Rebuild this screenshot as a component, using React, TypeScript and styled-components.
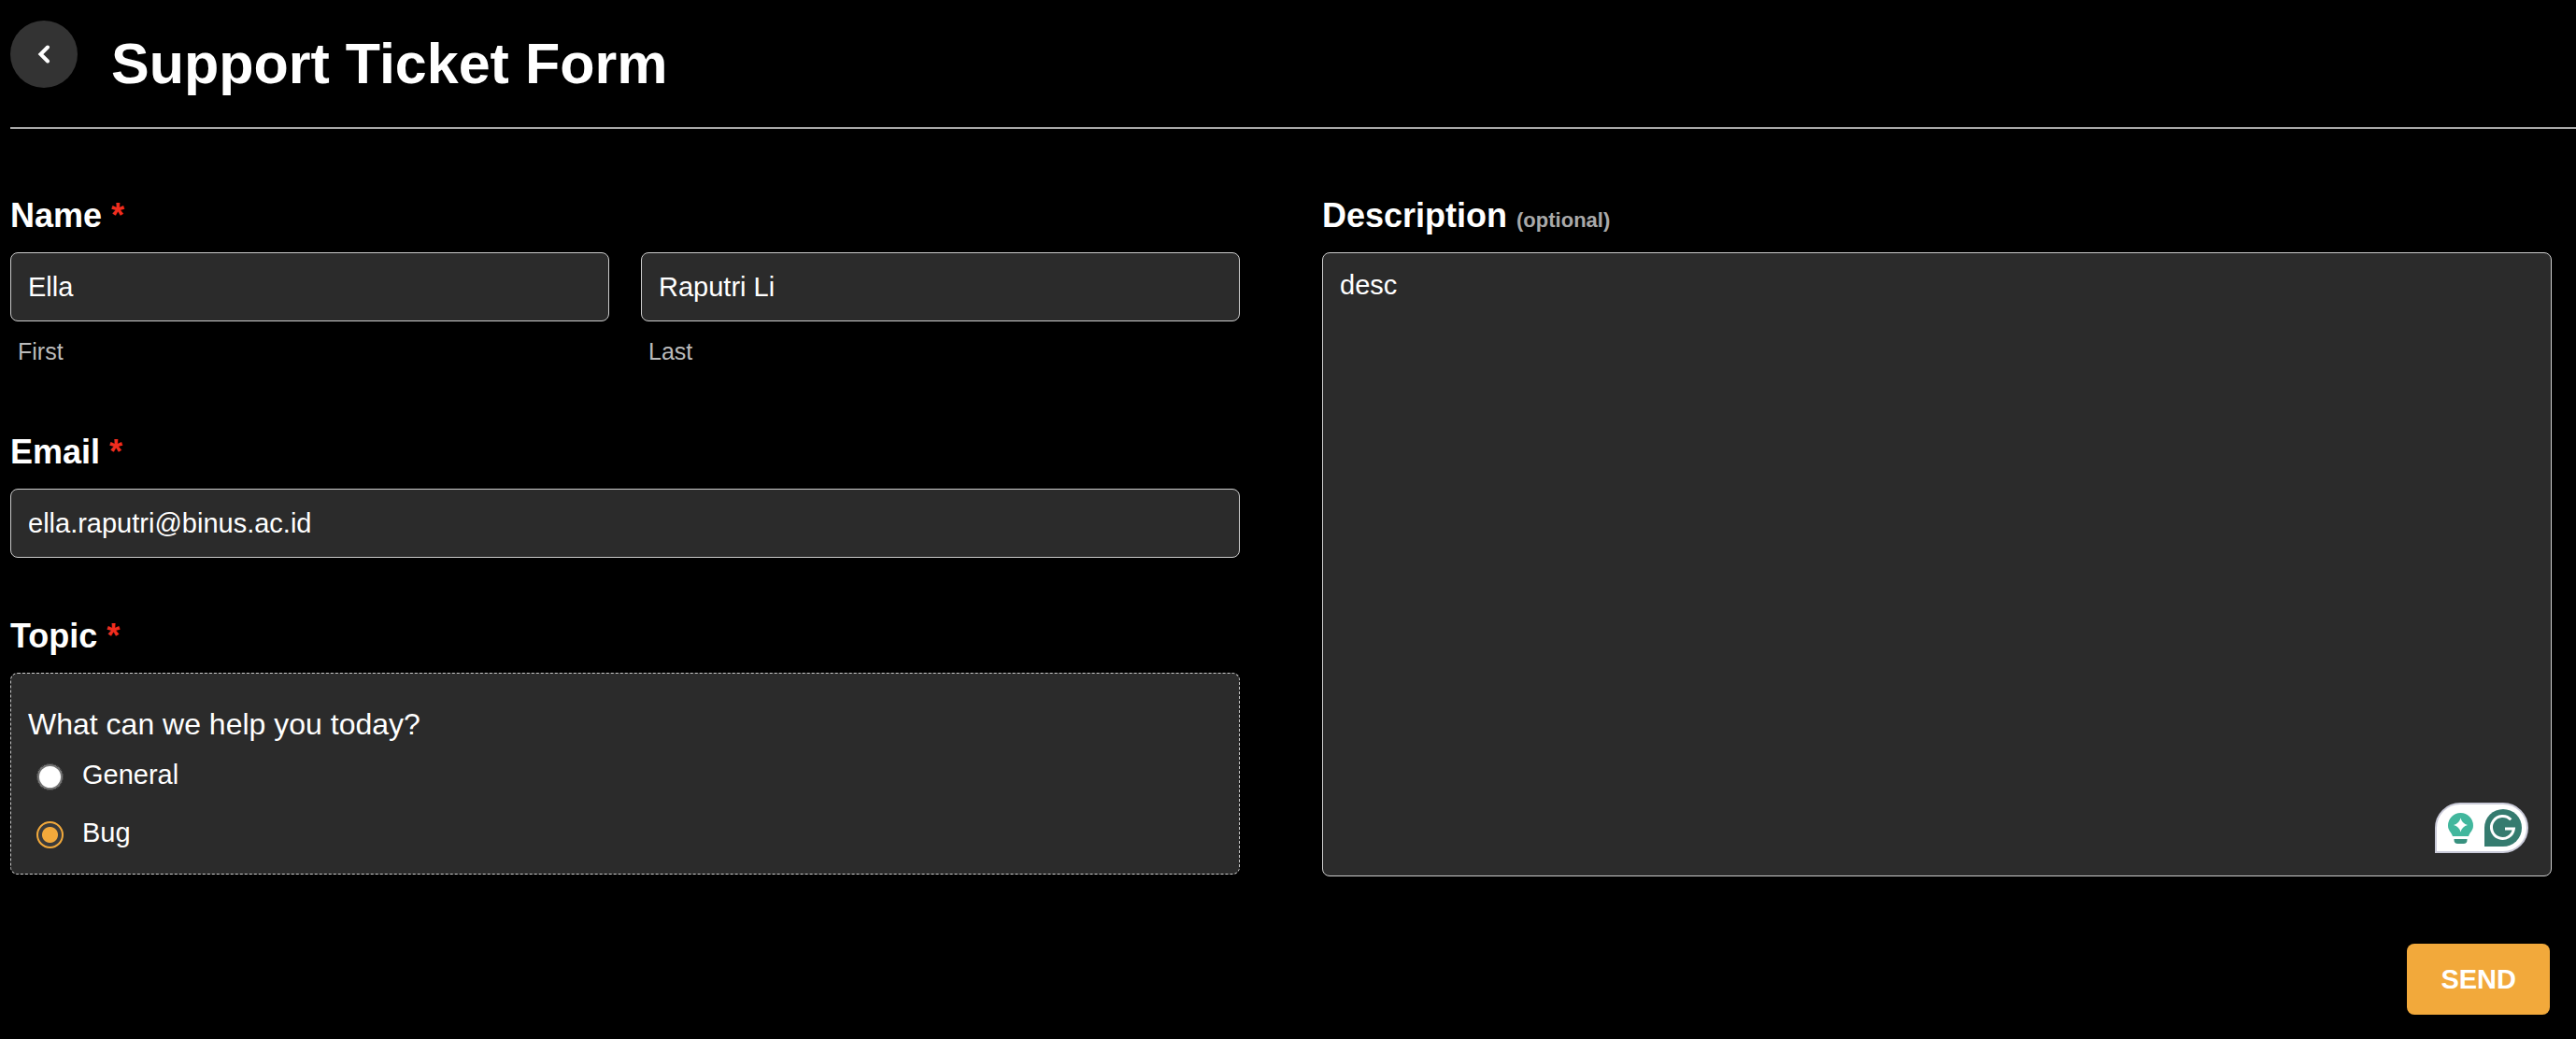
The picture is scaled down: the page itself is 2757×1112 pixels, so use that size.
import React from "react";
import styled, { createGlobalStyle } from "styled-components";

const Global = createGlobalStyle`
  *, *::before, *::after { box-sizing: border-box; }
  body {
    margin: 0;
    background: #000;
    color: #fff;
    font-family: "Liberation Sans", Arial, sans-serif;
  }
  button, input, textarea { font: inherit; color: inherit; }
`;

const Page = styled.main`
  padding: 22px 0 24px 11px;
`;

const Header = styled.header`
  display: flex;
  align-items: flex-start;
  gap: 36px;
  padding-bottom: 28px;
  border-bottom: 2px solid #a9a9a9;
`;

const BackButton = styled.button`
  display: grid;
  place-items: center;
  flex: none;
  width: 72px;
  height: 72px;
  padding: 0;
  border: 0;
  border-radius: 50%;
  background: #333;
  cursor: pointer;
`;

const Title = styled.h1`
  margin: 0;
  padding-top: 6px;
  font-size: 61px;
  line-height: 80px;
`;

const Form = styled.form`
  display: grid;
  grid-template-columns: 1fr 1fr;
  column-gap: 88px;
  padding: 73px 26px 0 0;
`;

const Column = styled.div`
  display: flex;
  flex-direction: column;
  gap: 64px;
`;

const Group = styled.fieldset`
  min-width: 0;
  margin: 0;
  padding: 0;
  border: 0;
`;

const Field = styled.div`
  display: flex;
  flex-direction: column;
`;

const labelText = `
  display: block;
  padding: 0 0 19px;
  font-size: 36px;
  font-weight: 700;
  line-height: 40px;
`;

const Label = styled.label`${labelText}`;
const Legend = styled.legend`${labelText}`;

const Required = styled.span`
  color: #f02d1f;
`;

const Optional = styled.span`
  color: #a9a9a9;
  font-size: 22px;
  line-height: 1;
`;

const NameRow = styled.div`
  display: grid;
  grid-template-columns: 1fr 1fr;
  gap: 34px;
`;

const box = `
  width: 100%;
  border: 1px solid #ccc;
  border-radius: 8px;
  background: #2b2b2b;
  font-size: 29px;
  outline: none;
`;

const TextInput = styled.input`
  ${box}
  height: 74px;
  padding: 0 18px;
`;

const Hint = styled.label`
  padding: 17px 8px 9px;
  color: #bbb;
  font-size: 25px;
  line-height: 30px;
`;

const TopicBox = styled.div`
  ${box}
  border-style: dashed;
  padding: 34px 18px 13px;
`;

const Question = styled.p`
  margin: 0 0 3px;
  font-size: 32px;
  line-height: 40px;
`;

const Option = styled.label`
  display: flex;
  align-items: center;
  gap: 20px;
  height: 62px;
  padding-left: 9px;
  line-height: 32px;
`;

const Radio = styled.input`
  appearance: none;
  flex: none;
  width: 29px;
  height: 29px;
  margin: 4px 0 0;
  border: 1px solid #2b2b2b;
  border-radius: 50%;
  background: #fff;
  box-shadow: inset 0 0 0 2px #767676;

  &:checked {
    border: 2px solid #f2a93b;
    background: radial-gradient(circle, #f2a93b 8px, #3b3b3b 9px);
    box-shadow: none;
  }
`;

const Editor = styled.div`
  position: relative;
  display: flex;
`;

const Description = styled.textarea`
  ${box}
  height: 668px;
  padding: 18px;
  line-height: 33px;
  resize: none;
`;

const Assistant = styled.div`
  position: absolute;
  right: 25px;
  bottom: 25px;
  display: flex;
`;

const Footer = styled.div`
  grid-column: 1 / -1;
  display: flex;
  justify-content: flex-end;
  padding: 72px 2px 0 0;
`;

const SendButton = styled.button`
  height: 76px;
  padding: 0 36px;
  border: 0;
  border-radius: 8px;
  background: #f2a93b;
  font-size: 29px;
  font-weight: 700;
  cursor: pointer;
`;

function AssistantIcon() {
  return (
    <svg width="100" height="54" viewBox="0 0 100 54" aria-hidden="true">
      <path d="M1 53V27A26 26 0 0 1 27 1H73A26 26 0 0 1 73 53Z" fill="#fff" stroke="#c9cad8" strokeWidth="2" />
      <path d="M27.500 11a13.500 13.500 0 0 1 13.500 13.500c0 5.500-3.500 7-5 11.500H19c-1.500-4.500-5-6-5-11.500a13.500 13.500 0 0 1 13.500-13.500Z" fill="#42b79d" />
      <path d="M27.500 16.500q1.500 6 7.500 7.500q-6 1.500-7.500 7.500q-1.500-6-7.500-7.500q6-1.500 7.500-7.500Z" fill="#fff" />
      <path d="M20.500 39H34.500v1a4 4 0 0 1-4 4h-6a4 4 0 0 1-4-4Z" fill="#38917f" />
      <path d="M53 47V27A20 20 0 1 1 73 47Z" fill="#357b6f" />
      <path d="M81.300 18.300A12 12 0 1 0 84.400 28H75" fill="none" stroke="#fff" strokeWidth="3" />
    </svg>
  );
}

export default function App() {
  return (
    <>
      <Global />
      <Page>
        <Header>
          <BackButton type="button" aria-label="Back">
            <svg width="14" height="20" viewBox="0 0 14 20" aria-hidden="true">
              <path d="M11 2.500L3.500 10L11 17.500" fill="none" stroke="#fff" strokeWidth="4" strokeLinecap="round" />
            </svg>
          </BackButton>
          <Title>Support Ticket Form</Title>
        </Header>
        <Form onSubmit={(event) => event.preventDefault()}>
          <Column>
            <Group>
              <Legend>Name <Required>*</Required></Legend>
              <NameRow>
                <Field>
                  <TextInput id="first" defaultValue="Ella" />
                  <Hint htmlFor="first">First</Hint>
                </Field>
                <Field>
                  <TextInput id="last" defaultValue="Raputri Li" />
                  <Hint htmlFor="last">Last</Hint>
                </Field>
              </NameRow>
            </Group>
            <Field>
              <Label htmlFor="email">Email <Required>*</Required></Label>
              <TextInput id="email" type="email" defaultValue="ella.raputri@binus.ac.id" />
            </Field>
            <Group>
              <Legend>Topic <Required>*</Required></Legend>
              <TopicBox>
                <Question>What can we help you today?</Question>
                <Option><Radio type="radio" name="topic" value="general" />General</Option>
                <Option><Radio type="radio" name="topic" value="bug" defaultChecked />Bug</Option>
              </TopicBox>
            </Group>
          </Column>
          <Field>
            <Label htmlFor="description">Description <Optional>(optional)</Optional></Label>
            <Editor>
              <Description id="description" defaultValue="desc" spellCheck={false} />
              <Assistant><AssistantIcon /></Assistant>
            </Editor>
          </Field>
          <Footer>
            <SendButton type="submit">SEND</SendButton>
          </Footer>
        </Form>
      </Page>
    </>
  );
}
